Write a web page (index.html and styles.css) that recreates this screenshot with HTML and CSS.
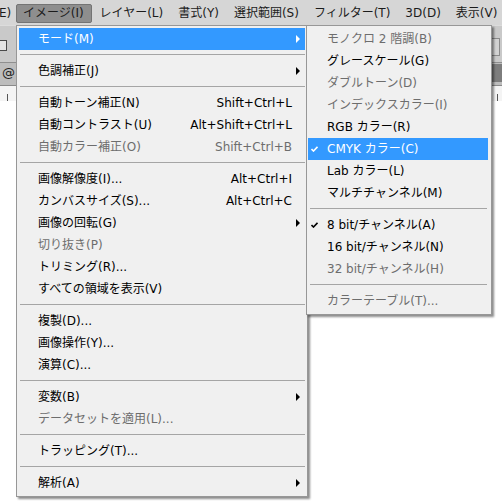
FILE: index.html
```html
<!DOCTYPE html>
<html lang="ja">
<head>
<meta charset="utf-8">
<link rel="stylesheet" href="styles.css">
</head>
<body>
<div class="app">
  <div class="menubar">
    <span class="mb-item mb-first">E)</span>
    <span class="mb-item mb-active">イメージ(I)</span>
    <span class="mb-item">レイヤー(L)</span>
    <span class="mb-item">書式(Y)</span>
    <span class="mb-item">選択範囲(S)</span>
    <span class="mb-item">フィルター(T)</span>
    <span class="mb-item">3D(D)</span>
    <span class="mb-item">表示(V)</span>
  </div>
  <div class="optbar">
    <div class="opt-btn"></div>
    <div class="opt-input"></div>
  </div>
  <div class="tabbar">
    <span class="tab-text">@</span>
    <div class="tab-dark"></div>
  </div>
  <div class="ruler"></div>
  <div class="canvas"></div>
</div>

<div class="menu main-menu">
  <div class="item hl"><span class="lbl">モード(M)</span><span class="arrow"></span></div>
  <div class="sep"></div>
  <div class="item"><span class="lbl">色調補正(J)</span><span class="arrow"></span></div>
  <div class="sep"></div>
  <div class="item"><span class="lbl">自動トーン補正(N)</span><span class="sc">Shift+Ctrl+L</span></div>
  <div class="item"><span class="lbl">自動コントラスト(U)</span><span class="sc">Alt+Shift+Ctrl+L</span></div>
  <div class="item dis"><span class="lbl">自動カラー補正(O)</span><span class="sc">Shift+Ctrl+B</span></div>
  <div class="sep"></div>
  <div class="item"><span class="lbl">画像解像度(I)...</span><span class="sc">Alt+Ctrl+I</span></div>
  <div class="item"><span class="lbl">カンバスサイズ(S)...</span><span class="sc">Alt+Ctrl+C</span></div>
  <div class="item"><span class="lbl">画像の回転(G)</span><span class="arrow"></span></div>
  <div class="item dis"><span class="lbl">切り抜き(P)</span></div>
  <div class="item"><span class="lbl">トリミング(R)...</span></div>
  <div class="item"><span class="lbl">すべての領域を表示(V)</span></div>
  <div class="sep"></div>
  <div class="item"><span class="lbl">複製(D)...</span></div>
  <div class="item"><span class="lbl">画像操作(Y)...</span></div>
  <div class="item"><span class="lbl">演算(C)...</span></div>
  <div class="sep"></div>
  <div class="item"><span class="lbl">変数(B)</span><span class="arrow"></span></div>
  <div class="item dis"><span class="lbl">データセットを適用(L)...</span></div>
  <div class="sep"></div>
  <div class="item"><span class="lbl">トラッピング(T)...</span></div>
  <div class="sep"></div>
  <div class="item"><span class="lbl">解析(A)</span><span class="arrow"></span></div>
</div>

<div class="menu sub-menu">
  <div class="item dis"><span class="lbl">モノクロ 2 階調(B)</span></div>
  <div class="item"><span class="lbl">グレースケール(G)</span></div>
  <div class="item dis"><span class="lbl">ダブルトーン(D)</span></div>
  <div class="item dis"><span class="lbl">インデックスカラー(I)</span></div>
  <div class="item"><span class="lbl">RGB カラー(R)</span></div>
  <div class="item hl checked"><svg class="check" viewBox="0 0 7 6" width="7" height="6"><path d="M0.5 3 L2.5 5 L6.5 0.8" fill="none" stroke="currentColor" stroke-width="1.6"/></svg><span class="lbl">CMYK カラー(C)</span></div>
  <div class="item"><span class="lbl">Lab カラー(L)</span></div>
  <div class="item"><span class="lbl">マルチチャンネル(M)</span></div>
  <div class="sep"></div>
  <div class="item checked"><svg class="check" viewBox="0 0 7 6" width="7" height="6"><path d="M0.5 3 L2.5 5 L6.5 0.8" fill="none" stroke="currentColor" stroke-width="1.6"/></svg><span class="lbl">8 bit/チャンネル(A)</span></div>
  <div class="item"><span class="lbl">16 bit/チャンネル(N)</span></div>
  <div class="item dis"><span class="lbl">32 bit/チャンネル(H)</span></div>
  <div class="sep"></div>
  <div class="item dis"><span class="lbl">カラーテーブル(T)...</span></div>
</div>
</body>
</html>
```

FILE: styles.css
```css
* { box-sizing: border-box; }
html, body { margin: 0; padding: 0; }
body {
  width: 502px;
  height: 504px;
  overflow: hidden;
  position: relative;
  background: #ffffff;
  font-family: "DejaVu Sans", "Noto Sans CJK JP", sans-serif;
  font-size: 12px;
  color: #000;
}
.app {
  display: flex;
  flex-direction: column;
  height: 504px;
}
.menubar {
  height: 25px;
  flex: none;
  background: #d6d6d6;
  display: flex;
  align-items: center;
  white-space: nowrap;
  color: #1b1b1b;
  overflow: hidden;
}
.mb-item {
  flex: none;
  padding: 0 7.5px;
  line-height: 19px;
  height: 19px;
  margin-top: 2px;
}
.mb-first { padding: 0; margin-left: -1px; width: 17px; }
.mb-active {
  background: #8e8e8e;
  border: 1px solid #747474;
  border-radius: 2px;
  width: 76px;
  padding: 0 0 0 6px;
  line-height: 17px;
}
.optbar {
  flex: none;
  height: 38px;
  background: #c9c9c9;
  border-top: 1px solid #dcdcdc;
  border-bottom: 1px solid #8f8f8f;
  position: relative;
}
.opt-btn {
  position: absolute;
  left: -4px;
  top: 14px;
  width: 11px;
  height: 11px;
  border: 1px solid #4a4a4a;
  background: #e4e4e4;
}
.opt-input {
  position: absolute;
  right: 2px;
  top: 12px;
  width: 12px;
  height: 18px;
  border: 1px solid #8a8a8a;
  background: #d2d2d2;
}
.tabbar {
  flex: none;
  height: 23px;
  background: #bdbdbd;
  border-bottom: 1px solid #8a8a8a;
  display: flex;
  align-items: center;
  position: relative;
}
.tab-text { margin-left: 2px; margin-top: -3px; font-size: 13px; color: #222; }
.tab-dark {
  position: absolute;
  right: 0;
  top: 1px;
  width: 10px;
  height: 18px;
  background: #7d7d7d;
}
.ruler {
  flex: none;
  height: 15px;
  background:
    repeating-linear-gradient(90deg, transparent 0 7px, #555 7px 8px, transparent 8px 14px) 0 8px / 100% 7px no-repeat,
    #f4f4f4;
}
.canvas { flex: 1; background: #fff; }

/* menus */
.menu {
  position: absolute;
  background: #f0f0f0;
  border: 1px solid #979797;
  box-shadow: 2px 2px 2px rgba(0,0,0,0.45);
  white-space: nowrap;
}
.main-menu {
  left: 16px;
  top: 25px;
  width: 292px;
  padding: 2px;
}
.sub-menu {
  left: 306px;
  top: 25px;
  width: 186px;
  padding: 2px 3px 2px 1px;
}
.item {
  height: 22px;
  display: flex;
  align-items: center;
  padding-left: 19px;
  padding-right: 13px;
  line-height: 22px;
}
.item .lbl { flex: 1; }
.item .sc { text-align: right; }
.item.dis { color: #6d6d6d; }
.item.hl { background: #3399ff; color: #fff; }
.arrow {
  width: 0;
  height: 0;
  border-left: 4px solid #000;
  border-top: 4px solid transparent;
  border-bottom: 4px solid transparent;
  margin-right: -8px;
}
.item.hl .arrow { border-left-color: #fff; }
.sep {
  height: 10px;
  padding: 4px 0 0 1px;
}
.sep::before {
  content: "";
  display: block;
  height: 1px;
  background: #a5a5a5;
}
.sub-menu .item { padding-left: 19px; padding-right: 4px; }
.sub-menu .item.checked { padding-left: 3px; }
.check { margin-right: 9px; flex: none; }
.sub-menu .sep { padding: 4px 1px 0 2px; }
```
